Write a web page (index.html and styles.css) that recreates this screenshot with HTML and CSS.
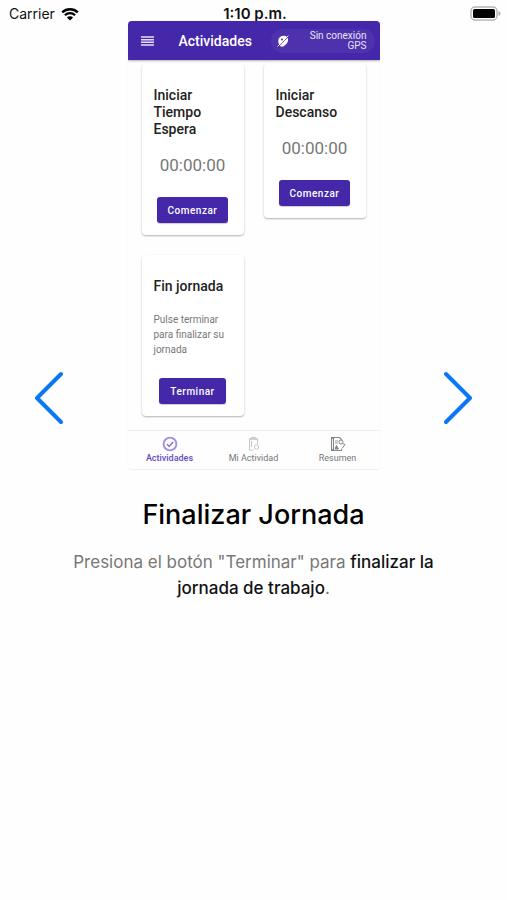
FILE: index.html
```html
<!DOCTYPE html>
<html lang="es">
<head>
  <meta charset="UTF-8">
  <meta name="viewport" content="width=device-width, initial-scale=1.0">
  <title>Finalizar Jornada</title>
  <link rel="stylesheet" href="styles.css">
</head>
<body>
  <header class="status-bar">
    <div class="carrier">
      <span>Carrier</span>
      <svg width="18" height="14" viewBox="0 0 18 14">
        <path d="M1.2 5.4a11.2 11.2 0 0 1 15.6 0M3.9 8.2a7.3 7.3 0 0 1 10.2 0" fill="none" stroke="#000" stroke-width="2.3"/>
        <path d="M9 13.6L5.9 10.5a4.4 4.4 0 0 1 6.2 0z"/>
      </svg>
    </div>
    <time class="clock">1:10 p.m.</time>
    <svg class="battery" width="31" height="15" viewBox="0 0 31 15">
      <rect x="1" y="1" width="26" height="13" rx="4" fill="#fff" stroke="#b5b5b5" stroke-width="1.4"/>
      <rect x="3" y="3" width="22" height="9" rx="1.5"/>
      <path d="M28.5 5v5q2-.8 2-2.5t-2-2.5z" fill="#aaa"/>
    </svg>
  </header>

  <main class="slider">
    <button class="arrow" type="button" aria-label="Anterior">
      <svg width="28" height="54" viewBox="0 0 28 54"><path d="M26 3L2 27l24 24"/></svg>
    </button>

    <section class="slide">
      <div class="phone">
        <div class="toolbar">
          <button class="menu" type="button" aria-label="Menú">
            <svg width="13" height="10" viewBox="0 0 13 10"><path d="M0 1h13M0 3.7h13M0 6.3h13M0 9h13" stroke="#fff" stroke-opacity=".85" stroke-width="1.4"/></svg>
          </button>
          <h2>Actividades</h2>
          <div class="gps">
            <svg width="12" height="12" viewBox="0 0 12 12">
              <path d="M3.8 11.4C-.6 7.500 1 1 6.500.8c4-.2 5.500 3.200 4 6.400-1 2-3 3.400-4.700 4.600z" fill="#fff"/>
              <path d="M1.500 11.600L11.600 1.400" stroke="#4e32ad" stroke-width=".8"/>
              <path d="M.6 11.4L11.400.6" stroke="#fff" stroke-width=".9"/>
              <circle cx="5" cy="4.400" r="1" fill="#4e32ad"/>
            </svg>
            <span>Sin conexión GPS</span>
          </div>
        </div>

        <div class="cards">
          <article class="card">
            <h3>Iniciar Tiempo Espera</h3>
            <p class="timer">00:00:00</p>
            <button class="btn" type="button">Comenzar</button>
          </article>
          <article class="card">
            <h3>Iniciar Descanso</h3>
            <p class="timer">00:00:00</p>
            <button class="btn" type="button">Comenzar</button>
          </article>
          <article class="card">
            <h3>Fin jornada</h3>
            <p class="note">Pulse terminar para finalizar su jornada</p>
            <button class="btn" type="button">Terminar</button>
          </article>
        </div>

        <nav class="tabs">
          <a href="#" class="active">
            <svg width="16" height="16" viewBox="0 0 16 16" fill="none" stroke="currentColor">
              <circle cx="8" cy="8" r="6.4" stroke-width="1.9" stroke-opacity=".7"/>
              <path d="M5 8.2l2.2 2.2L11.2 6" stroke-width="1.3"/>
            </svg>
            <span>Actividades</span>
          </a>
          <a href="#" class="muted">
            <svg width="16" height="16" viewBox="0 0 16 16" fill="none" stroke="currentColor">
              <path d="M7.5 14h-4V3h8v5M3 3h9M5.500 3V1.500h4V3M5.500 5v6"/>
              <circle cx="10.500" cy="11" r="2.200"/>
            </svg>
            <span>Mi Actividad</span>
          </a>
          <a href="#">
            <svg width="16" height="16" viewBox="0 0 16 16" fill="none" stroke="currentColor">
              <path d="M11.500 13v1.500h-10v-13h8L12 4M1.500 2.500h2v11h-2" stroke-width="1.1"/>
              <path d="M5 5h3M5 7h3" stroke-width=".8"/>
              <circle cx="11" cy="6" r="2"/>
              <path d="M12.500 7.500l2.500 1-3 4"/>
              <path d="M5 13l1.500-3.500 2 3.500z" fill="currentColor"/>
            </svg>
            <span>Resumen</span>
          </a>
        </nav>
      </div>

      <h1>Finalizar Jornada</h1>
      <p class="description">Presiona el botón "Terminar" para <strong>finalizar la jornada de trabajo</strong>.</p>
    </section>

    <button class="arrow" type="button" aria-label="Siguiente">
      <svg width="28" height="54" viewBox="0 0 28 54"><path d="M2 3l24 24L2 51"/></svg>
    </button>
  </main>
</body>
</html>
```

FILE: styles.css
```css
* {
  margin: 0;
  padding: 0;
  box-sizing: border-box;
}

body {
  font-family: Inter, 'Liberation Sans', sans-serif;
  background: #fefefe;
  color: #111;
}

button {
  border: none;
  background: none;
  cursor: pointer;
}

svg {
  display: block;
}

.status-bar {
  display: grid;
  grid-template-columns: 1fr auto 1fr;
  align-items: end;
  height: 21px;
  padding: 0 6px 0 9px;
  font-size: 14px;
  line-height: 15px;
}

.carrier {
  display: flex;
  align-items: center;
  gap: 6px;
}

.clock {
  font-size: 15px;
  font-weight: 600;
}

.battery {
  justify-self: end;
}

.slider {
  display: grid;
  grid-template-columns: 28px 1fr 28px;
  gap: 8px;
  align-items: center;
  padding: 0 35px;
}

.arrow path {
  fill: none;
  stroke: #0a78f5;
  stroke-width: 4;
  stroke-linecap: round;
  stroke-linejoin: round;
}

.slide {
  padding-bottom: 174px;
  text-align: center;
}

.phone {
  max-width: 252px;
  margin: 0 auto;
  border-radius: 4px;
  overflow: hidden;
  box-shadow: 0 0 1px rgba(0, 0, 0, 0.15);
  font-family: Roboto, sans-serif;
  text-align: left;
}

.toolbar {
  display: flex;
  align-items: center;
  height: 39px;
  padding: 0 5px 0 13px;
  background: #4527a9;
  color: #fff;
  box-shadow: 0 1px 2px rgba(0, 0, 0, 0.3);
  position: relative;
}

.toolbar h2 {
  margin-left: 25px;
  font-size: 14px;
  font-weight: 500;
}

.gps {
  display: flex;
  align-items: center;
  justify-content: space-between;
  width: 104px;
  height: 24px;
  margin-left: auto;
  padding: 0 8px 0 6px;
  border-radius: 12px;
  background: #4e32ad;
  color: #e8e4f6;
  font-size: 10px;
  line-height: 10px;
  text-align: right;
}

.gps span {
  width: 64px;
}

.cards {
  display: grid;
  grid-template-columns: 1fr 1fr;
  gap: 20px;
  align-items: start;
  padding: 4px 14px 14px;
}

.card {
  display: flex;
  flex-direction: column;
  align-items: center;
  padding: 23px 12px 12px;
  border-radius: 4px;
  background: #fff;
  box-shadow: 0 1px 2px rgba(0, 0, 0, 0.3);
}

.card h3 {
  align-self: stretch;
  margin-bottom: 17px;
  font-size: 14px;
  font-weight: 500;
  line-height: 17px;
  color: #222;
}

.timer {
  font-size: 17px;
  line-height: 21px;
  color: #777;
}

.note {
  font-size: 10px;
  line-height: 15px;
  color: #777;
}

.btn {
  height: 26px;
  margin-top: 21px;
  padding: 0 11px;
  border-radius: 3px;
  background: #4527a9;
  color: #fff;
  font-family: inherit;
  font-size: 10px;
  font-weight: 500;
  letter-spacing: 0.05em;
  box-shadow: 0 1px 1px rgba(0, 0, 0, 0.2);
}

.tabs {
  display: grid;
  grid-template-columns: 1fr 1fr 1fr;
  height: 40px;
  padding-top: 5px;
  border-top: 1px solid #f0f0f0;
  border-bottom: 1px solid #f0f0f0;
}

.tabs a {
  display: flex;
  flex-direction: column;
  align-items: center;
  color: #777;
  font-size: 9px;
  line-height: 12px;
  text-decoration: none;
}

.tabs svg {
  color: #888;
}

.tabs .muted svg {
  color: #c4c4c4;
}

.tabs .active {
  color: #6549c0;
  font-weight: 500;
}

.tabs .active svg {
  color: #7a62cb;
}

h1 {
  margin-top: 28px;
  font-size: 27px;
  font-weight: 500;
  line-height: 34px;
  color: #000;
}

.description {
  margin-top: 17px;
  font-size: 17px;
  line-height: 26px;
  color: #777;
}

.description strong {
  font-weight: 500;
  color: #111;
}
```
